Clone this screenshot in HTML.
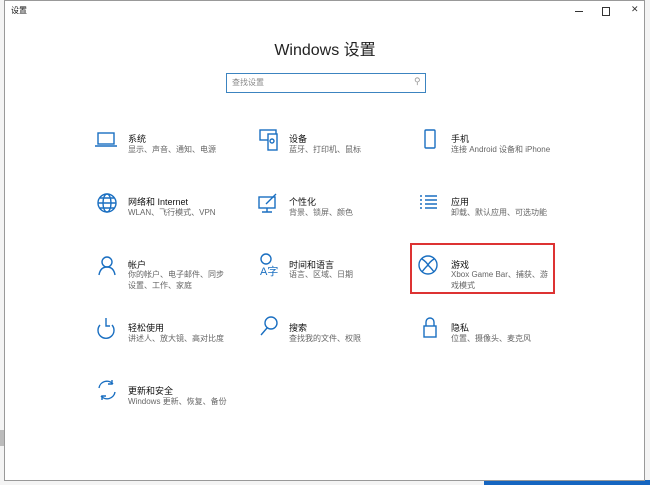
<!DOCTYPE html><html><head><meta charset="utf-8"><style>
body{margin:0;width:650px;height:485px;background:#f4f4f4;position:relative;overflow:hidden;font-family:"Liberation Sans","Noto Sans CJK SC",sans-serif}
.win{position:absolute;left:4px;top:0;width:641px;height:481px;background:#fff;border:1px solid #999;box-sizing:border-box}
.t{position:absolute;font-size:9px;color:#111;white-space:nowrap}
.s{position:absolute;font-size:8px;color:#666;line-height:11px}
svg{position:absolute}
</style></head><body>
<div style="position:absolute;left:484px;top:480px;width:166px;height:5px;background:#1565c0"></div>
<div style="position:absolute;left:0;top:430px;width:4px;height:16px;background:#bbb"></div>
<div class="win">
<div class="t" style="left:6px;top:4px;font-size:8px">设置</div>
<div style="position:absolute;left:570px;top:10px;width:8px;height:1px;background:#333"></div>
<div style="position:absolute;left:597px;top:6px;width:6px;height:7px;border:1px solid #333"></div>
<div class="t" style="left:626px;top:3px;font-size:9px;color:#333">✕</div>
<div class="t" style="left:0;width:640px;text-align:center;top:35px;font-size:16px;color:#222">Windows 设置</div>
<div style="position:absolute;left:221px;top:72px;width:200px;height:20px;border:1px solid #3c84c0;box-sizing:border-box"></div>
<div class="s" style="left:227px;top:76px;color:#888">查找设置</div>
<div class="t" style="left:409px;top:75px;color:#999;font-size:9px">⚲</div>
<div style="position:absolute;left:405px;top:242px;width:145px;height:51px;border:2px solid #d33;box-sizing:border-box"></div>
</div>
<svg width="650" height="485" fill="none" stroke="#1a6fc1" stroke-width="1.4">
<rect x="98" y="133" width="16" height="11"/><path d="M95 146h22"/>
<rect x="260" y="130" width="16" height="10"/><rect x="268" y="134" width="9" height="16" fill="#fff"/><circle cx="272" cy="141" r="2"/>
<rect x="425" y="130" width="10" height="18" rx="1"/>
<circle cx="107" cy="203" r="9"/><ellipse cx="107" cy="203" rx="4" ry="9"/><path d="M98 203h18M100 198h14M100 208h14"/>
<rect x="259" y="197" width="16" height="11"/><path d="M267 208v4M262 212h10M266 204l10-10"/>
<path d="M420 196h2M420 200h2M420 204h2M420 208h2M425 196h12M425 200h12M425 204h12M425 208h12"/>
<circle cx="107" cy="262" r="5"/><path d="M99 275c1-6 4-8 8-8s7 2 8 8"/>
<circle cx="266" cy="259" r="5"/><text x="260" y="275" font-size="11" fill="#1a6fc1" stroke="none">A字</text>
<circle cx="428" cy="265" r="9"/><path d="M422 259c3 2 5 4 6 6 1-2 3-4 6-6M422 272c2-3 4-5 6-7 2 2 4 4 6 7"/>
<path d="M100 325a8 8 0 1 0 12 0M106 318v8h4"/>
<circle cx="271" cy="323" r="6"/><path d="M267 328l-6 7"/>
<rect x="424" y="326" width="12" height="11"/><path d="M426 326v-4a4 4 0 0 1 8 0v4"/>
<path d="M99 388a8 8 0 0 1 14-4M115 392a8 8 0 0 1-14 4M112 380v4h-4M102 400v-4h4"/>
</svg>
<div class="t" style="left:128px;top:132px">系统</div><div class="s" style="left:128px;top:144px">显示、声音、通知、电源</div>
<div class="t" style="left:289px;top:132px">设备</div><div class="s" style="left:289px;top:144px">蓝牙、打印机、鼠标</div>
<div class="t" style="left:451px;top:132px">手机</div><div class="s" style="left:451px;top:144px">连接 Android 设备和 iPhone</div>
<div class="t" style="left:128px;top:195px">网络和 Internet</div><div class="s" style="left:128px;top:207px">WLAN、飞行模式、VPN</div>
<div class="t" style="left:289px;top:195px">个性化</div><div class="s" style="left:289px;top:207px">背景、锁屏、颜色</div>
<div class="t" style="left:451px;top:195px">应用</div><div class="s" style="left:451px;top:207px">卸载、默认应用、可选功能</div>
<div class="t" style="left:128px;top:258px">帐户</div><div class="s" style="left:128px;top:269px;width:100px">你的帐户、电子邮件、同步设置、工作、家庭</div>
<div class="t" style="left:289px;top:258px">时间和语言</div><div class="s" style="left:289px;top:269px">语言、区域、日期</div>
<div class="t" style="left:451px;top:258px">游戏</div><div class="s" style="left:451px;top:269px;width:100px">Xbox Game Bar、捕获、游戏模式</div>
<div class="t" style="left:128px;top:321px">轻松使用</div><div class="s" style="left:128px;top:333px">讲述人、放大镜、高对比度</div>
<div class="t" style="left:289px;top:321px">搜索</div><div class="s" style="left:289px;top:333px">查找我的文件、权限</div>
<div class="t" style="left:451px;top:321px">隐私</div><div class="s" style="left:451px;top:333px">位置、摄像头、麦克风</div>
<div class="t" style="left:128px;top:384px">更新和安全</div><div class="s" style="left:128px;top:396px">Windows 更新、恢复、备份</div>
</body></html>
